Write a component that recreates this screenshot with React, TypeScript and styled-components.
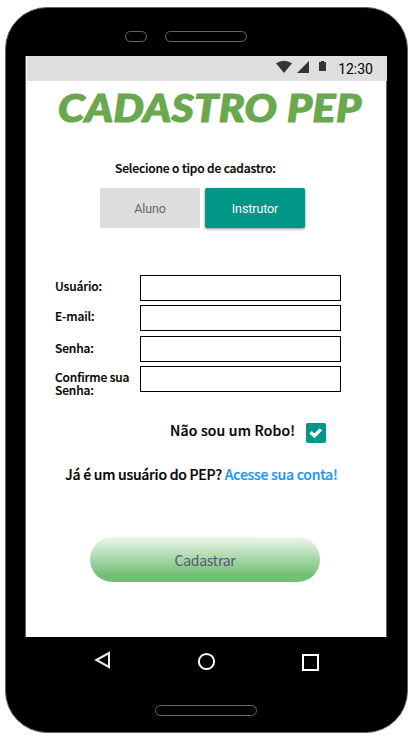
import React, { useState } from "react";
import styled, { createGlobalStyle } from "styled-components";

const GlobalStyle = createGlobalStyle`
  *, *::before, *::after { box-sizing: border-box; }
  html, body { margin: 0; background: #fff; }
  body { width: 415px; height: 741px; overflow: hidden; font-family: "Noto Sans CJK JP", "Noto Sans", sans-serif; color: #000; }
  button { font: inherit; margin: 0; padding: 0; border: 0; cursor: pointer; }
`;

const Phone = styled.div`
  width: 403px;
  height: 726px;
  margin: 7px 0 0 5px;
  border: 1px solid #666;
  border-radius: 42px;
  background: #000;
  display: flex;
  flex-direction: column;
`;

const Earpiece = styled.div`
  height: 48px;
  padding: 23px 0 0 119px;
  display: flex;
  gap: 18px;
`;

const Slot = styled.div<{ $width: number }>`
  width: ${(p) => p.$width}px;
  height: 11px;
  border: 1px solid #666;
  border-radius: 6px;
`;

const Screen = styled.main`
  width: 362px;
  height: 581px;
  margin-left: 19px;
  border: solid #666;
  border-width: 0 1px;
  background: #fff;
  display: flex;
  flex-direction: column;
`;

const StatusBar = styled.div`
  height: 25px;
  margin: 0 -1px 0 1px;
  padding-right: 14px;
  background: #dfdfdf;
  display: flex;
  justify-content: flex-end;
  svg { display: block; }
`;

const Clock = styled.span`
  margin-left: 10px;
  font: 400 14px/26px Roboto, sans-serif;
`;

const Title = styled.h1`
  width: fit-content;
  height: 52px;
  margin: 0 0 0 32px;
  font: italic 900 37px/54px Lato, sans-serif;
  letter-spacing: 0.4px;
  white-space: nowrap;
  color: #6aa84f;
  -webkit-text-stroke: 1.2px #6aa84f;
  transform: scaleX(1.155);
  transform-origin: 0 0;
`;

const Text = styled.span<{ $size: number; $spacing?: number }>`
  font-size: ${(p) => p.$size}px;
  font-weight: 500;
  letter-spacing: ${(p) => p.$spacing ?? 0}px;
  white-space: nowrap;
  -webkit-text-stroke: 0.2px currentColor;
`;

const TypePrompt = styled.div`
  height: 55px;
  padding: 22px 0 0 89px;
  line-height: 22px;
`;

const TypeRow = styled.div`
  display: flex;
  gap: 5px;
  height: 40px;
  padding-left: 74px;
`;

const TypeButton = styled.button<{ $active: boolean }>`
  && { font: 400 12.5px/42px Roboto, sans-serif; letter-spacing: -0.1px; }
  width: 100px;
  height: 40px;
  border-radius: 2px;
  color: ${(p) => (p.$active ? "#fff" : "#666")};
  background: ${(p) => (p.$active ? "#009688" : "#ddd")};
  box-shadow: ${(p) => (p.$active ? "0 1px 3px rgba(0,0,0,.45)" : "none")};
`;

const Form = styled.form`
  margin-top: 47px;
  padding-left: 29px;
  display: grid;
  grid-template-columns: 85px 201px;
  grid-template-rows: 30px 31px 30px 30px;
`;

const Label = styled.label<{ $top: number }>`
  padding-top: ${(p) => p.$top}px;
  font-size: 12px;
  font-weight: 500;
  letter-spacing: -0.14px;
  line-height: 13px;
  white-space: nowrap;
  -webkit-text-stroke: 0.2px currentColor;
`;

const Input = styled.input`
  width: 201px;
  height: 26px;
  margin: 0;
  padding: 0 6px;
  border: 1px solid #000;
  border-radius: 0;
  outline: 0;
  background: #fff;
`;

const RobotRow = styled.div`
  height: 20px;
  margin-top: 27px;
  padding-left: 144px;
  display: flex;
`;

const RobotText = styled.div`
  width: 136px;
  line-height: 13px;
`;

const Checkbox = styled.button`
  width: 20px;
  height: 20px;
  border-radius: 2px;
  background: #009688;
  svg { display: block; }
`;

const AccountRow = styled.p`
  height: 24px;
  margin: 20px 0 0;
  padding-left: 39px;
  line-height: 20px;
  white-space: nowrap;
`;

const Link = styled.a`
  color: #2196f3;
  text-decoration: none;
`;

const Submit = styled.button`
  && { font-size: 14px; line-height: 46px; letter-spacing: -0.25px; }
  width: 230px;
  height: 45px;
  margin: 50px 0 0 64px;
  border-radius: 23px;
  color: #5b5377;
  background: linear-gradient(#eef7ef 0%, #71bf74 85%, #71bf74 100%);
`;

const NavBar = styled.nav`
  height: 68px;
  padding: 14px 0 0 88px;
  display: flex;
  svg { display: block; }
`;

const HomeBar = styled.div`
  display: flex;
  padding-left: 149px;
`;

const StatusIcons = () => (
  <svg width="52" height="25" viewBox="0 0 52 25" fill="#333">
    <path d="M0 7.2Q8 2.2 16 7.2L8 17Z" />
    <path d="M21 17H33V5Z" />
    <path d="M43 6h2V5h3v1h2v9h-7Z" />
  </svg>
);

const CheckIcon = () => (
  <svg width="20" height="20" viewBox="0 0 20 20" fill="none" stroke="#fff" strokeWidth="3.4">
    <path d="M4.6 9.2 8.4 12.8 15 6.4" />
  </svg>
);

const NavIcons = () => (
  <svg width="230" height="24" viewBox="0 0 230 24" fill="none" stroke="#fff" strokeWidth="2">
    <path d="M2.3 9 15 2V16Z" stroke="#e8e8e8" />
    <circle cx="112.5" cy="10.5" r="7.6" />
    <rect x="209" y="4" width="15" height="15" />
  </svg>
);

const FIELDS = [
  { id: "usuario", label: "Usuário:", top: 4, type: "text" },
  { id: "email", label: "E-mail:", top: 4, type: "email" },
  { id: "senha", label: "Senha:", top: 5, type: "password" },
  { id: "confirme", label: <>Confirme sua<br />Senha:</>, top: 4, type: "password" },
];

export default function App() {
  const [type, setType] = useState("Instrutor");
  const [human, setHuman] = useState(true);
  return (
    <>
      <GlobalStyle />
      <Phone>
        <Earpiece>
          <Slot $width={22} />
          <Slot $width={82} />
        </Earpiece>
        <Screen>
          <StatusBar>
            <StatusIcons />
            <Clock>12:30</Clock>
          </StatusBar>
          <Title>CADASTRO PEP</Title>
          <TypePrompt><Text $size={12} $spacing={-0.14}>Selecione o tipo de cadastro:</Text></TypePrompt>
          <TypeRow>
            {["Aluno", "Instrutor"].map((name) => (
              <TypeButton key={name} type="button" $active={type === name} onClick={() => setType(name)}>{name}</TypeButton>
            ))}
          </TypeRow>
          <Form>
            {FIELDS.map((f) => (
              <React.Fragment key={f.id}>
                <Label htmlFor={f.id} $top={f.top}>{f.label}</Label>
                <Input id={f.id} type={f.type} />
              </React.Fragment>
            ))}
          </Form>
          <RobotRow>
            <RobotText><Text $size={14} $spacing={0.2}>Não sou um Robo!</Text></RobotText>
            <Checkbox type="button" role="checkbox" aria-checked={human} aria-label="Não sou um Robo!" onClick={() => setHuman(!human)}>
              {human && <CheckIcon />}
            </Checkbox>
          </RobotRow>
          <AccountRow>
            <Text $size={14} $spacing={-0.25}>Já é um usuário do PEP? <Link href="#">Acesse sua conta!</Link></Text>
          </AccountRow>
          <Submit type="button">Cadastrar</Submit>
        </Screen>
        <NavBar><NavIcons /></NavBar>
        <HomeBar><Slot $width={102} /></HomeBar>
      </Phone>
    </>
  );
}
